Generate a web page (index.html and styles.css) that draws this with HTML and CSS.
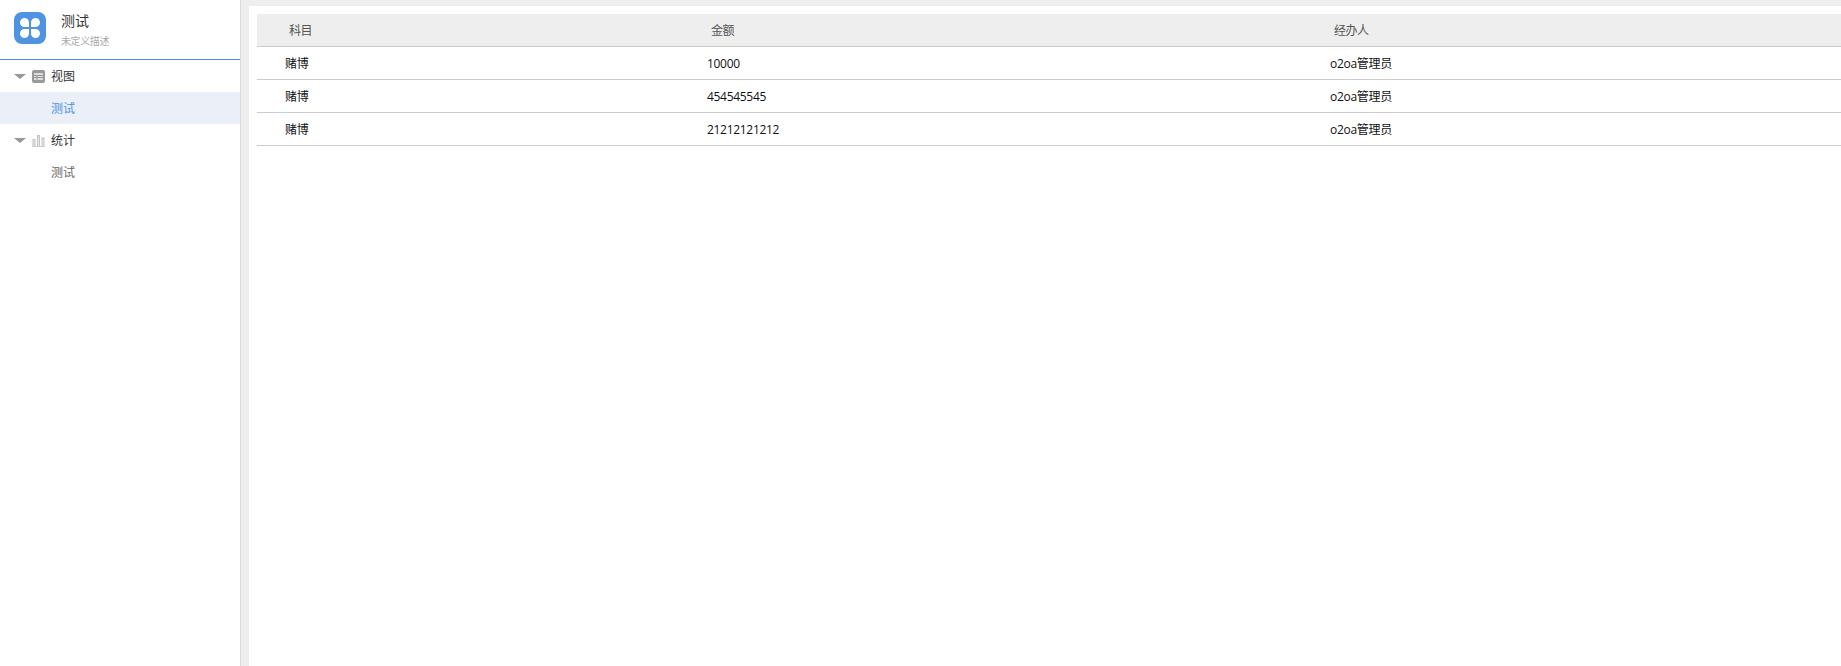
FILE: index.html
```html
<!DOCTYPE html>
<html lang="zh">
<head>
<meta charset="utf-8">
<title>测试</title>
<link rel="stylesheet" href="styles.css">
</head>
<body>
<div class="app">
  <aside class="sidebar">
    <header class="app-head">
      <svg class="app-logo" viewBox="0 0 32 32" aria-hidden="true">
        <rect width="32" height="32" rx="8" fill="#4f93e3"/>
        <path d="M15 15h-4.500a4.500 4.500 0 1 1 4.500-4.500zM17 15h4.500a4.500 4.500 0 1 0-4.500-4.500zM15 17h-4.500a4.500 4.500 0 1 0 4.500 4.500zM17 17h4.500a4.500 4.500 0 1 1-4.500 4.500z" fill="#fff"/>
      </svg>
      <div class="app-info">
        <div class="app-title">测试</div>
        <div class="app-desc">未定义描述</div>
      </div>
    </header>
    <nav class="nav">
      <div class="group">
        <span class="caret"></span>
        <svg class="group-icon" viewBox="0 0 13 13" aria-hidden="true">
          <rect width="13" height="13" rx="2" fill="#999"/>
          <rect x="2" y="3" width="9" height="7" fill="#ddd"/>
          <path d="M2 5.500h9M2 7.500h9M5 5v5" fill="none" stroke="#999" stroke-width="1"/>
        </svg>
        <span>视图</span>
      </div>
      <div class="item selected">测试</div>
      <div class="group">
        <span class="caret"></span>
        <svg class="group-icon" viewBox="0 0 13 13" aria-hidden="true">
          <path d="M0 12.500h13" stroke="#ccc" fill="none"/>
          <path d="M0.500 5h3v7h-3zM5 1h3v11H5zM9.500 3.500h3V12h-3z" fill="#c4c4c4"/>
          <path d="M1.500 6h1v6h-1zM6 2.500h1V12H6zM10.500 5h1v7h-1z" fill="#e8e8e8"/>
        </svg>
        <span>统计</span>
      </div>
      <div class="item">测试</div>
    </nav>
  </aside>
  <main class="main">
    <div class="panel">
      <table class="grid">
        <colgroup><col class="c1"><col class="c2"><col></colgroup>
        <thead>
          <tr><th>科目</th><th>金额</th><th>经办人</th></tr>
        </thead>
        <tbody>
          <tr><td>赌博</td><td>10000</td><td>o2oa管理员</td></tr>
          <tr><td>赌博</td><td>454545545</td><td>o2oa管理员</td></tr>
          <tr><td>赌博</td><td>21212121212</td><td>o2oa管理员</td></tr>
        </tbody>
      </table>
    </div>
  </main>
</div>
</body>
</html>
```
FILE: styles.css
```css
* { box-sizing: border-box; }
html, body { margin: 0; height: 100%; overflow: hidden; }
body {
  font-family: "Open Sans", "Noto Sans CJK SC", sans-serif;
  font-size: 12px;
  color: #333;
  background: #fff;
}
.app { display: flex; height: 666px; }
.sidebar {
  width: 241px;
  flex: none;
  background: #fff;
  border-right: 1px solid #ddd;
}
.app-head {
  height: 60px;
  display: flex;
  align-items: flex-start;
  padding: 12px 0 0 14px;
  border-bottom: 1px solid #4a90d9;
}
.app-logo { width: 32px; height: 32px; flex: none; }
.app-info { margin-left: 15px; }
.app-title { font-size: 14px; line-height: 20px; margin-top: -1px; color: #333; }
.app-desc { font-size: 10px; line-height: 14px; margin-top: 3px; color: #aaa; letter-spacing: -0.4px; }
.group {
  height: 32px;
  display: flex;
  align-items: center;
  padding-left: 14px;
  color: #333;
}
.caret {
  width: 0;
  height: 0;
  border-left: 6px solid transparent;
  border-right: 6px solid transparent;
  border-top: 5px solid #999;
  margin-right: 6px;
}
.group-icon { width: 13px; height: 13px; margin-right: 6px; flex: none; }
.item { height: 32px; line-height: 33px; padding-left: 51px; color: #666; }
.item.selected { background: #eaeff8; color: #4a90e2; }
.main {
  flex: 1;
  min-width: 0;
  background: #eee;
  padding: 6px 0 0 8px;
}
.panel { height: 100%; background: #fff; padding: 8px 0 0 8px; }
.grid { width: 1584px; border-collapse: separate; border-spacing: 0; table-layout: fixed; }
.c1 { width: 422px; }
.c2 { width: 623px; }
.grid th {
  height: 33px;
  text-align: left;
  font-weight: 400;
  color: #555;
  background: #eee;
  padding: 0 0 0 32px;
  letter-spacing: -0.5px;
  border-bottom: 1px solid #ccc;
}
.grid td {
  height: 33px;
  padding: 0 0 0 28px;
  color: #111;
  letter-spacing: -0.3px;
  border-bottom: 1px solid #ccc;
}
```
